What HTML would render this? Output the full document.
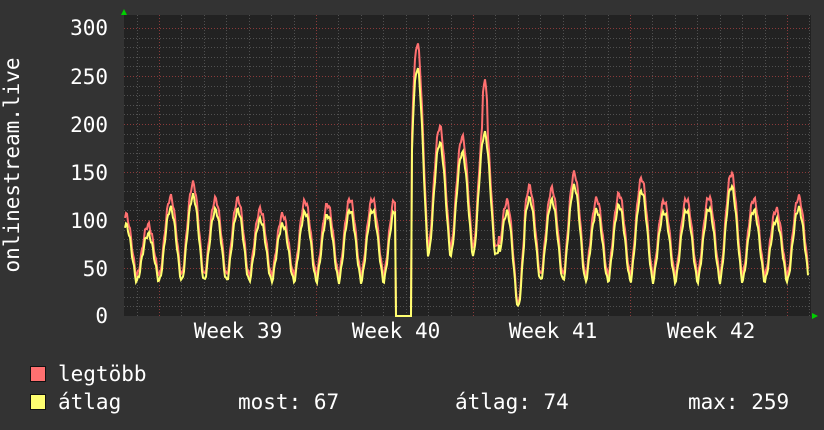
<!DOCTYPE html>
<html><head><meta charset="utf-8"><style>
html,body{margin:0;padding:0;background:#333333;}
body{width:824px;height:430px;overflow:hidden;position:relative;font-family:"DejaVu Sans Mono","Liberation Mono",monospace;color:#fff;}
.t{position:absolute;font-size:21px;white-space:pre;line-height:21px;}
.sq{position:absolute;width:14px;height:14px;border:1px solid #111;}
svg text{font-family:"DejaVu Sans Mono",monospace;font-size:21px;fill:#fff;}
</style></head><body>
<svg id="g" width="824" height="430" style="position:absolute;left:0;top:0" xmlns="http://www.w3.org/2000/svg">
<rect x="124" y="15" width="687" height="301" fill="#222222"/>
<g id="grid"></g>
<g id="lines"></g>
<polygon points="121,15 127,15 124,9" fill="#00d000"/>
<polygon points="812,313 812,319 818,316" fill="#00d000"/>
<text x="108" y="35" text-anchor="end">300</text>
<text x="108" y="84" text-anchor="end">250</text>
<text x="108" y="132" text-anchor="end">200</text>
<text x="108" y="180" text-anchor="end">150</text>
<text x="108" y="228" text-anchor="end">100</text>
<text x="108" y="276" text-anchor="end">50</text>
<text x="108" y="323" text-anchor="end">0</text>
<text x="238" y="338" text-anchor="middle">Week 39</text>
<text x="396" y="338" text-anchor="middle">Week 40</text>
<text x="553" y="338" text-anchor="middle">Week 41</text>
<text x="711" y="338" text-anchor="middle">Week 42</text>
<text transform="translate(19,165) rotate(-90)" text-anchor="middle">onlinestream.live</text>
</svg>
<div class="sq" style="left:30px;top:366px;background:#ff7070"></div>
<div class="sq" style="left:30px;top:394px;background:#ffff70"></div>
<div class="t" style="left:58px;top:364px">legtöbb</div>
<div class="t" style="left:58px;top:392px">átlag</div>
<div class="t" style="left:238px;top:392px">most: 67</div>
<div class="t" style="left:455px;top:392px">átlag: 74</div>
<div class="t" style="left:688px;top:392px">max: 259</div>
<script>
var NS="http://www.w3.org/2000/svg";
var grid=document.getElementById('grid'),lines=document.getElementById('lines');
function ln(x1,y1,x2,y2,c){var l=document.createElementNS(NS,'line');l.setAttribute('x1',x1);l.setAttribute('y1',y1);l.setAttribute('x2',x2);l.setAttribute('y2',y2);l.setAttribute('stroke',c);l.setAttribute('stroke-width',1);l.setAttribute('stroke-dasharray','1,2');grid.appendChild(l);}
for(var v=10;v<=300;v+=10){var y=Math.round(316-v*0.96)+0.5;ln(124,y,811,y,v%50==0?'#8a3a3a':'#505050');}
for(var k=-2;k<40;k++){var x=159+k*22.43;if(x<125||x>811)continue;var xx=Math.round(x)+0.5;ln(xx,15,xx,316,(k%7==0)?'#8a3a3a':'#505050');}
var peaks={126:95,148:85,171:112,193:125,216:110,238:110,260:100,283:95,305:108,328:105,350:110,372:110,395:110,418:258,440:180,462:170,485:190,507:108,529:122,552:120,574:135,597:110,619:115,641:130,664:108,686:110,709:112,731:135,753:110,776:100,798:112,821:100};
var pk=Object.keys(peaks).map(Number).sort(function(a,b){return a-b});
function amp(x){var best=pk[0];for(var i=0;i<pk.length;i++){if(Math.abs(pk[i]-x)<Math.abs(best-x))best=pk[i];}return peaks[best];}
function avg(x){
 if(x>=396&&x<=411)return 0;
 var p=((x-193)/22.43)%1;if(p<0)p+=1;
 var d=Math.min(p,1-p)*2;
 var f=Math.pow(Math.max(0,Math.cos(d*Math.PI/2)),1.6);
 var base=36; if(x>505&&x<525)base=8; if(x>412&&x<500)base=62;
 var a=amp(x);
 var v=base+(a-base)*f;
 v+=3*Math.sin(x*1.7);
 return Math.max(0,v);
}
var pa='',pr='';
for(var x=125;x<=808;x++){
 var a=avg(x),r=a*1.08+3;
 if(x>=396&&x<=411)r=0; if(x==395)r=118;
 if(Math.abs(x-418)<3)r=a*1.1; if(Math.abs(x-485)<3)r=a*1.28;
 pa+=(x==125?'M':'L')+x+','+(316-a*0.96).toFixed(1);
 pr+=(x==125?'M':'L')+x+','+(316-r*0.96).toFixed(1);
}
function path(d,c){var p=document.createElementNS(NS,'path');p.setAttribute('d',d);p.setAttribute('fill','none');p.setAttribute('stroke',c);p.setAttribute('stroke-width',2);lines.appendChild(p);}
path(pr,'#ff7070');path(pa,'#ffff70');
</script>
</body></html>
